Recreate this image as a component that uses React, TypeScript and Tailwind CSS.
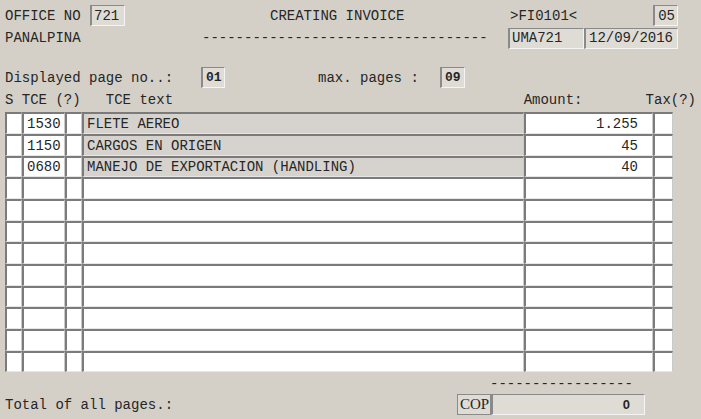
import type { ReactNode } from 'react';

type Line = { tce: string; text: string; amount: string };

const lines: Line[] = [
  { tce: '1530', text: 'FLETE AEREO', amount: '1.255' },
  { tce: '1150', text: 'CARGOS EN ORIGEN', amount: '45' },
  { tce: '0680', text: 'MANEJO DE EXPORTACION (HANDLING)', amount: '40' },
];

// 12 lines per page, the rest stay blank
const pageRows: (Line | null)[] = Array.from({ length: 12 }, (_, i) => lines[i] ?? null);

const mono = "font-['Liberation_Mono','Courier_New',monospace]";

const cell =
  'h-full flex items-center border-t-2 border-l-2 border-t-[#7b7b7b] border-l-[#7b7b7b] border-b border-r border-b-[#e6e6e6] border-r-[#c9c9c9]';

function Field({ className, children }: { className: string; children?: ReactNode }) {
  return (
    <div
      className={`h-[21px] flex items-center bg-[#dfdcd6] border-t border-l-2 border-t-[#8a8a8a] border-l-[#8a8a8a] border-b border-r border-b-[#f4f4f4] border-r-[#f4f4f4] ${className}`}
    >
      {children}
    </div>
  );
}

export default function App() {
  return (
    <div className={`w-[701px] h-[419px] bg-[#d4d0c8] text-[14px] leading-none text-[#262626] px-[5px] pt-[5px] overflow-hidden ${mono}`}>
      {/* header */}
      <div className="flex items-center h-[21px]">
        <span className="w-[85px]">OFFICE NO</span>
        <Field className="w-[35px] pl-[2px]">721</Field>
        <span className="w-[145px]" />
        <span className="w-[240px]">CREATING INVOICE</span>
        <span className="w-[143px]">&gt;FI0101&lt;</span>
        <Field className="w-[25px] justify-end pr-[2px]">05</Field>
      </div>
      <div className="flex items-center h-[22px] mt-[1px]">
        <span className="w-[197px]">PANALPINA</span>
        <span className="w-[306px]">----------------------------------</span>
        <Field className="w-[76px] pl-[2px] border-r-[#9a9a9a] border-b-[#9a9a9a]">UMA721</Field>
        <Field className="w-[94px] pl-[3px]">12/09/2016</Field>
      </div>

      <div className="flex items-center h-[21px] mt-[18px]">
        <span className="w-[196px]">Displayed page no..:</span>
        <Field className="w-[24px] pl-[3px] font-bold text-[13px]">01</Field>
        <span className="w-[93px]" />
        <span className="w-[122px]">max. pages :</span>
        <Field className="w-[25px] pl-[3px] font-bold text-[13px]">09</Field>
      </div>

      <div className="flex items-center h-[18px] mt-[3px] whitespace-pre">
        <span className="w-[519px]">{'S TCE (?)   TCE text'}</span>
        <span className="w-[122px]">Amount:</span>
        <span>Tax(?)</span>
      </div>

      {/* position lines */}
      <div className="mt-[3px] w-[668px] flex flex-col">
        {pageRows.map((row, i) => (
          <div key={i} className={`flex ${i % 3 === 2 ? 'h-[21px]' : 'h-[22px]'}`}>
            <div className={`${cell} w-[17px] bg-white`} />
            <div className={`${cell} w-[43px] bg-white pl-[3px]`}>{row?.tce}</div>
            <div className={`${cell} w-[17px] bg-white`} />
            <div className={`${cell} w-[442px] pl-[3px] ${row ? 'bg-[#d6d3ce]' : 'bg-white'}`}>{row?.text}</div>
            <div className={`${cell} w-[129px] bg-white justify-end pr-[14px]`}>{row?.amount}</div>
            <div className={`${cell} w-[20px] bg-white`} />
          </div>
        ))}
      </div>

      {/* totals */}
      <div className="flex items-center h-[18px] mt-[3px]">
        <span className="ml-[485px]">-----------------</span>
      </div>
      <div className="flex items-center h-[21px] mt-[1px]">
        <span className="w-[452px]">Total of all pages.:</span>
        <div className="w-[34px] h-[21px] flex items-center pl-[2px] bg-[#dfdcd6] border border-[#8a8a8a] font-['Liberation_Serif','Times_New_Roman',serif] text-[15px]">
          COP
        </div>
        <Field className="w-[154px] justify-end pr-[14px] font-bold font-['Liberation_Sans',Arial,sans-serif] text-[13px]">0</Field>
      </div>
    </div>
  );
}
